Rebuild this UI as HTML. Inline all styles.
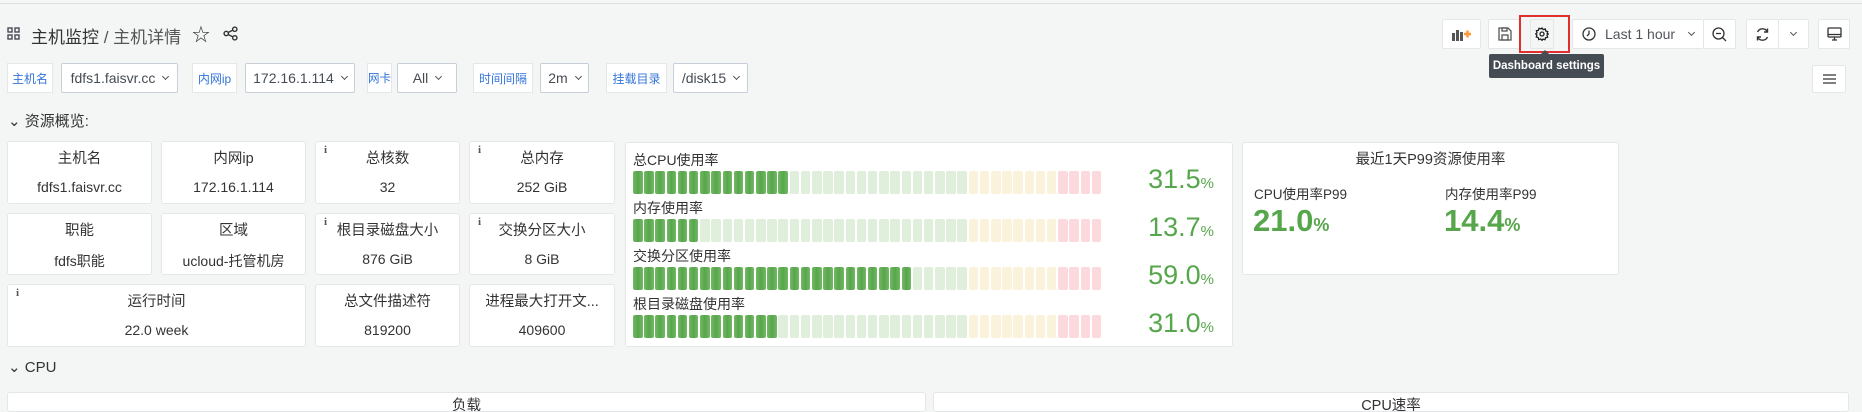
<!DOCTYPE html>
<html><head><meta charset="utf-8">
<style>
*{box-sizing:border-box;margin:0;padding:0}
body{width:1862px;height:402px;overflow:hidden;background:#f4f5f5;font-family:"Liberation Sans","Noto Sans CJK SC",sans-serif;color:#464c54;position:relative}
.a{position:absolute}
.btn{position:absolute;top:19px;height:30px;background:#fff;border:1px solid #e4e6e8;border-radius:2px;display:flex;align-items:center;justify-content:center}
.lbl{position:absolute;top:63px;height:30px;background:#fff;border:1px solid #e4e6e8;color:#3274d9;font-size:12px;display:flex;align-items:center;justify-content:center;white-space:nowrap}
.sel{position:absolute;top:63px;height:30px;background:#fff;border:1px solid #c7d0d9;border-radius:2px;color:#464c54;font-size:14px;display:flex;align-items:center;justify-content:center;white-space:nowrap}
.sel:after{content:"";width:4px;height:4px;border-right:1px solid #555;border-bottom:1px solid #555;transform:rotate(45deg);margin-left:8px;margin-top:-3px}
.p{position:absolute;background:#fff;border:1px solid #e4e6e8;border-radius:3px;text-align:center;color:#333;overflow:hidden}
.p .t{position:absolute;left:0;right:0;top:5px;font-size:14.5px}
.p .v{position:absolute;left:0;right:0;top:37px;font-size:14px}
.p .i{position:absolute;left:8px;top:2px;font-size:11px;font-weight:bold;font-family:"Liberation Serif",serif;color:#555}
.bar{position:absolute;left:633px;height:23px;display:flex;gap:1.7px}
.bar i{display:block;width:9.5px;height:23px;border-radius:2px}
.g{background:linear-gradient(90deg,#73b866,#56a64b 50%,#73b866)}
.lg{background:#e0eedc}.y{background:#fbf2dc}.r{background:#fbd9dd}
.bl{position:absolute;left:633px;font-size:14px;color:#333}
.bv{position:absolute;right:648px;font-size:27px;color:#56a64b}
.bv small{font-size:15px}
</style></head><body>
<div class="a" style="left:0;top:3px;width:1862px;height:1px;background:#dde0e2"></div>
<!-- title -->
<svg class="a" style="left:7px;top:27px" width="13" height="13" viewBox="0 0 13 13" fill="none" stroke="#464c54" stroke-width="1.4"><rect x="1" y="1" width="4" height="4"/><rect x="8" y="1" width="4" height="4"/><rect x="1" y="8" width="4" height="4"/><rect x="8" y="8" width="4" height="4"/></svg>
<div class="a" style="left:31px;top:23px;font-size:17px;color:#333;white-space:nowrap">主机监控 <span style="color:#555">/ 主机详情</span></div>
<div class="a" style="left:192px;top:21px;font-size:18px;color:#333">☆</div>
<svg class="a" style="left:223px;top:26px" width="15" height="15" viewBox="0 0 14 14" fill="none" stroke="#333" stroke-width="1.3"><circle cx="11" cy="3" r="2"/><circle cx="3" cy="7" r="2"/><circle cx="11" cy="11" r="2"/><path d="M5 6 9 4M5 8l4 2"/></svg>
<!-- top right -->
<div class="btn" style="left:1442px;width:39px"><svg width="22" height="14" viewBox="0 0 22 14"><g fill="#555"><rect x="1" y="6" width="3" height="8"/><rect x="5" y="3" width="3" height="11"/><rect x="9" y="5" width="3" height="9"/></g><path d="M13 7h7M16.5 3.5v7" stroke="#ff9830" stroke-width="2.4"/></svg></div>
<div class="btn" style="left:1488px;width:33px"><svg width="14" height="14" viewBox="0 0 14 14" fill="none" stroke="#555" stroke-width="1.3"><path d="M1 1h9l3 3v9H1z"/><rect x="4" y="1" width="5" height="3"/><rect x="4" y="8" width="6" height="5"/></svg></div>
<div class="btn" style="left:1530px;width:24px;background:#f4f5f5"><svg width="14" height="14" viewBox="0 0 14 14" fill="none" stroke="#222" stroke-width="1.3"><circle cx="7" cy="7" r="2"/><path d="M7 1l1.3 1.6 2-.6.4 2 2 .6-.6 2L13.3 7 12 8.3l.6 2-2 .4-.6 2-2-.6L7 13.3 5.7 12l-2 .6-.4-2-2-.6.6-2L.7 7 2 5.7l-.6-2 2-.4.6-2 2 .6z"/></svg></div>
<div class="a" style="left:1519px;top:15px;width:51px;height:38px;border:2px solid #e02f2f"></div>
<div class="btn" style="left:1572px;width:131px;justify-content:flex-start;padding-left:9px;font-size:14px;border-right:none"><svg width="14" height="14" viewBox="0 0 14 14" fill="none" stroke="#333" stroke-width="1.3"><circle cx="7" cy="7" r="6"/><path d="M7 3.5V7L5 9"/></svg><span style="margin-left:9px;color:#52545c">Last 1 hour</span><span style="margin-left:14px;width:5px;height:5px;border-right:1px solid #555;border-bottom:1px solid #555;transform:rotate(45deg);margin-top:-4px"></span></div>
<div class="btn" style="left:1703px;width:33px"><svg width="15" height="15" viewBox="0 0 15 15" fill="none" stroke="#333" stroke-width="1.3"><circle cx="6.5" cy="6.5" r="5.5"/><path d="M4 6.5h5M10.5 10.5 14 14"/></svg></div>
<div class="btn" style="left:1746px;width:33px"><svg width="15" height="15" viewBox="0 0 15 15" fill="none" stroke="#333" stroke-width="1.4"><path d="M12.5 5A5.5 5.5 0 0 0 2.5 5M2.5 10a5.5 5.5 0 0 0 10 0M12.5 1.5V5H9M2.5 13.5V10H6"/></svg></div>
<div class="btn" style="left:1778px;width:31px"><span style="width:5px;height:5px;border-right:1px solid #555;border-bottom:1px solid #555;transform:rotate(45deg);margin-top:-4px"></span></div>
<div class="btn" style="left:1818px;width:32px"><svg width="15" height="15" viewBox="0 0 15 15" fill="none" stroke="#333" stroke-width="1.3"><rect x="1" y="1" width="13" height="9" rx="1"/><path d="M1 7.5h13M5 13h5M7.5 10v3"/></svg></div>
<div class="a" style="left:1489px;top:54px;width:115px;height:24px;background:#464c54;border-radius:2px;color:#fff;font-size:11.5px;font-weight:bold;display:flex;align-items:center;justify-content:center">Dashboard settings</div>
<div class="a" style="left:1541px;top:50px;border:4px solid transparent;border-bottom-color:#464c54;border-top:0"></div>
<div class="btn" style="left:1812px;top:65px;width:34px;height:28px"><svg width="13" height="10" viewBox="0 0 13 10" stroke="#333" stroke-width="1.3"><path d="M0 1h13M0 5h13M0 9h13"/></svg></div>
<!-- variables -->
<div class="lbl" style="left:7px;width:46px">主机名</div><div class="sel" style="left:61px;width:117px">fdfs1.faisvr.cc</div>
<div class="lbl" style="left:192px;width:45px">内网ip</div><div class="sel" style="left:245px;width:110px">172.16.1.114</div>
<div class="lbl" style="left:367px;width:25px;font-size:11.5px">网卡</div><div class="sel" style="left:397px;width:60px">All</div>
<div class="lbl" style="left:473px;width:60px">时间间隔</div><div class="sel" style="left:540px;width:49px">2m</div>
<div class="lbl" style="left:606px;width:61px">挂载目录</div><div class="sel" style="left:673px;width:75px">/disk15</div>
<div class="a" style="left:8px;top:110px;font-size:15px;color:#333">⌄ 资源概览:</div>
<!-- stat panels -->
<div class="p" style="left:7px;top:141px;width:145px;height:63px"><div class="t">主机名</div><div class="v">fdfs1.faisvr.cc</div></div>
<div class="p" style="left:161px;top:141px;width:145px;height:63px"><div class="t">内网ip</div><div class="v">172.16.1.114</div></div>
<div class="p" style="left:315px;top:141px;width:145px;height:63px"><span class="i">i</span><div class="t">总核数</div><div class="v">32</div></div>
<div class="p" style="left:469px;top:141px;width:146px;height:63px"><span class="i">i</span><div class="t">总内存</div><div class="v">252 GiB</div></div>
<div class="p" style="left:7px;top:213px;width:145px;height:62px"><div class="t">职能</div><div class="v">fdfs职能</div></div>
<div class="p" style="left:161px;top:213px;width:145px;height:62px"><div class="t">区域</div><div class="v">ucloud-托管机房</div></div>
<div class="p" style="left:315px;top:213px;width:145px;height:62px"><span class="i">i</span><div class="t">根目录磁盘大小</div><div class="v">876 GiB</div></div>
<div class="p" style="left:469px;top:213px;width:146px;height:62px"><span class="i">i</span><div class="t">交换分区大小</div><div class="v">8 GiB</div></div>
<div class="p" style="left:7px;top:284px;width:299px;height:63px"><span class="i">i</span><div class="t">运行时间</div><div class="v">22.0 week</div></div>
<div class="p" style="left:315px;top:284px;width:145px;height:63px"><div class="t">总文件描述符</div><div class="v">819200</div></div>
<div class="p" style="left:469px;top:284px;width:146px;height:63px"><div class="t">进程最大打开文...</div><div class="v">409600</div></div>
<!-- bar gauge -->
<div class="p" style="left:625px;top:142px;width:608px;height:205px"></div>
<div class="bl" style="top:150px">总CPU使用率</div><div class="bar" id="b1" style="top:171px"></div><div class="bv" style="top:164px">31.5<small>%</small></div>
<div class="bl" style="top:198px">内存使用率</div><div class="bar" id="b2" style="top:219px"></div><div class="bv" style="top:212px">13.7<small>%</small></div>
<div class="bl" style="top:246px">交换分区使用率</div><div class="bar" id="b3" style="top:267px"></div><div class="bv" style="top:260px">59.0<small>%</small></div>
<div class="bl" style="top:294px">根目录磁盘使用率</div><div class="bar" id="b4" style="top:315px"></div><div class="bv" style="top:308px">31.0<small>%</small></div>
<!-- p99 -->
<div class="p" style="left:1242px;top:142px;width:377px;height:133px"><div class="t" style="top:5px">最近1天P99资源使用率</div>
<div class="a" style="left:11px;top:40px;font-size:13.5px;text-align:left;white-space:nowrap">CPU使用率P99</div>
<div class="a" style="left:10px;top:60px;font-size:31px;font-weight:bold;color:#56a64b;text-align:left;white-space:nowrap">21.0<span style="font-size:18px">%</span></div>
<div class="a" style="left:202px;top:40px;font-size:13.5px;text-align:left;white-space:nowrap">内存使用率P99</div>
<div class="a" style="left:201px;top:60px;font-size:31px;font-weight:bold;color:#56a64b;text-align:left;white-space:nowrap">14.4<span style="font-size:18px">%</span></div></div>
<div class="a" style="left:8px;top:358px;font-size:15px;color:#333">⌄ CPU</div>
<div class="p" style="left:7px;top:392px;width:919px;height:20px"><div class="t" style="top:1px">负载</div></div>
<div class="p" style="left:933px;top:392px;width:916px;height:20px"><div class="t" style="top:1px">CPU速率</div></div>
<script>
[[1,14],[2,6],[3,25],[4,13]].forEach(function(a){var h='';for(var i=0;i<42;i++){var c=i<a[1]?'g':i<30?'lg':i<38?'y':'r';h+='<i class="'+c+'"></i>';}document.getElementById('b'+a[0]).innerHTML=h;});
</script>
</body></html>
